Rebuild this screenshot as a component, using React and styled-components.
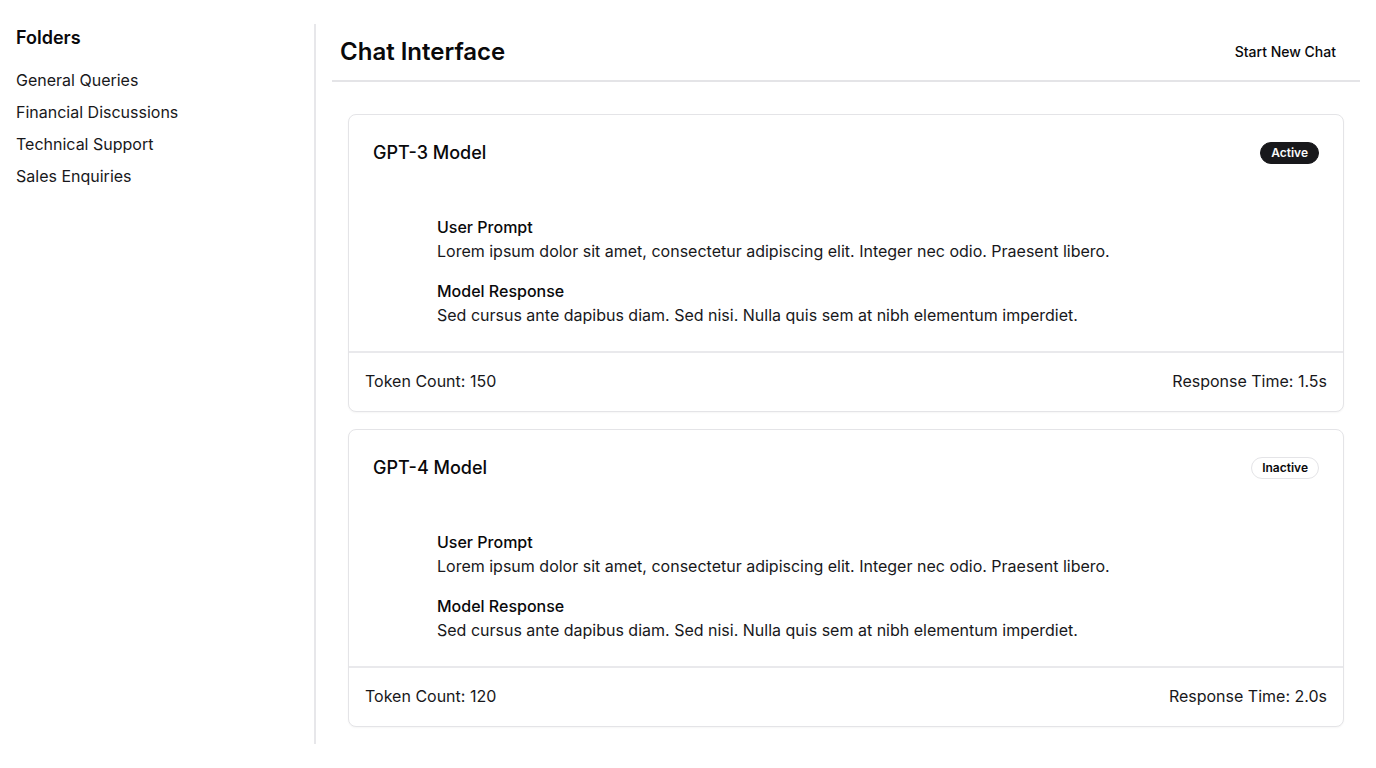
import React from "react";
import styled, { createGlobalStyle } from "styled-components";

const Global = createGlobalStyle`
  * { box-sizing: border-box; }
  html, body { margin: 0; padding: 0; background: #ffffff; }
  body {
    font-family: Inter, "Noto Sans", sans-serif;
    color: #09090b;
    -webkit-font-smoothing: antialiased;
  }
`;

const Layout = styled.div`
  display: flex;
  height: 768px;
  padding: 24px 16px;
`;

const Sidebar = styled.aside`
  width: 300px;
  flex-shrink: 0;
  border-right: 2px solid #e7e7ea;
  display: flex;
  flex-direction: column;
`;

const SidebarTitle = styled.h2`
  margin: 0 0 16px;
  font-size: 18px;
  line-height: 28px;
  font-weight: 600;
`;

const FolderList = styled.ul`
  list-style: none;
  margin: 0;
  padding: 0;
  display: flex;
  flex-direction: column;
  gap: 8px;
`;

const FolderItem = styled.li`
  font-size: 16px;
  line-height: 24px;
  color: #18181b;
`;

const Main = styled.main`
  flex: 1;
  padding-left: 16px;
  display: flex;
  flex-direction: column;
  min-width: 0;
`;

const Header = styled.header`
  display: flex;
  align-items: center;
  justify-content: space-between;
  padding: 12px 8px;
  border-bottom: 2px solid #e4e4e7;
`;

const Title = styled.h1`
  margin: 0;
  font-size: 24px;
  line-height: 32px;
  font-weight: 600;
`;

const GhostButton = styled.button`
  border: none;
  background: transparent;
  font-family: inherit;
  font-size: 14px;
  line-height: 20px;
  font-weight: 500;
  color: #09090b;
  padding: 6px 16px;
  border-radius: 6px;
  cursor: pointer;
`;

const Content = styled.div`
  padding: 32px 16px 16px;
  display: flex;
  flex-direction: column;
  gap: 17px;
`;

const Card = styled.section`
  border: 1px solid #e4e4e7;
  border-radius: 8px;
  background: #fff;
  box-shadow: 0 1px 2px rgba(0, 0, 0, 0.04);
`;

const CardHeader = styled.div`
  display: flex;
  align-items: center;
  justify-content: space-between;
  padding: 24px;
`;

const CardTitle = styled.h3`
  margin: 0;
  font-size: 18px;
  line-height: 28px;
  font-weight: 500;
`;

const Badge = styled.span`
  display: inline-flex;
  align-items: center;
  height: 22px;
  padding: 0 10px;
  border-radius: 999px;
  font-size: 12px;
  font-weight: 600;
  line-height: 16px;
  background: ${(p) => (p.$active ? "#18181b" : "#ffffff")};
  color: ${(p) => (p.$active ? "#fafafa" : "#09090b")};
  border: 1px solid ${(p) => (p.$active ? "#18181b" : "#e4e4e7")};
`;

const CardBody = styled.div`
  padding: 24px 24px 24px 88px;
  display: flex;
  flex-direction: column;
  gap: 16px;
`;

const Message = styled.div`
  display: flex;
  flex-direction: column;
`;

const Label = styled.div`
  font-size: 16px;
  line-height: 24px;
  font-weight: 500;
`;

const Text = styled.p`
  margin: 0;
  font-size: 16px;
  line-height: 24px;
  color: #18181b;
`;

const CardFooter = styled.div`
  display: flex;
  justify-content: space-between;
  align-items: center;
  padding: 16px 16px 18px;
  border-top: 2px solid #e9e9ec;
  font-size: 16px;
  line-height: 24px;
  color: #18181b;
`;

const folders = ["General Queries", "Financial Discussions", "Technical Support", "Sales Enquiries"];

const models = [
  { name: "GPT-3 Model", active: true, tokens: 150, time: "1.5s" },
  { name: "GPT-4 Model", active: false, tokens: 120, time: "2.0s" },
];

export default function App() {
  return (
    <>
      <Global />
      <Layout>
        <Sidebar>
          <SidebarTitle>Folders</SidebarTitle>
          <FolderList>
            {folders.map((f) => (
              <FolderItem key={f}>{f}</FolderItem>
            ))}
          </FolderList>
        </Sidebar>
        <Main>
          <Header>
            <Title>Chat Interface</Title>
            <GhostButton>Start New Chat</GhostButton>
          </Header>
          <Content>
            {models.map((m) => (
              <Card key={m.name}>
                <CardHeader>
                  <CardTitle>{m.name}</CardTitle>
                  <Badge $active={m.active}>{m.active ? "Active" : "Inactive"}</Badge>
                </CardHeader>
                <CardBody>
                  <Message>
                    <Label>User Prompt</Label>
                    <Text>Lorem ipsum dolor sit amet, consectetur adipiscing elit. Integer nec odio. Praesent libero.</Text>
                  </Message>
                  <Message>
                    <Label>Model Response</Label>
                    <Text>Sed cursus ante dapibus diam. Sed nisi. Nulla quis sem at nibh elementum imperdiet.</Text>
                  </Message>
                </CardBody>
                <CardFooter>
                  <span>Token Count: {m.tokens}</span>
                  <span>Response Time: {m.time}</span>
                </CardFooter>
              </Card>
            ))}
          </Content>
        </Main>
      </Layout>
    </>
  );
}
